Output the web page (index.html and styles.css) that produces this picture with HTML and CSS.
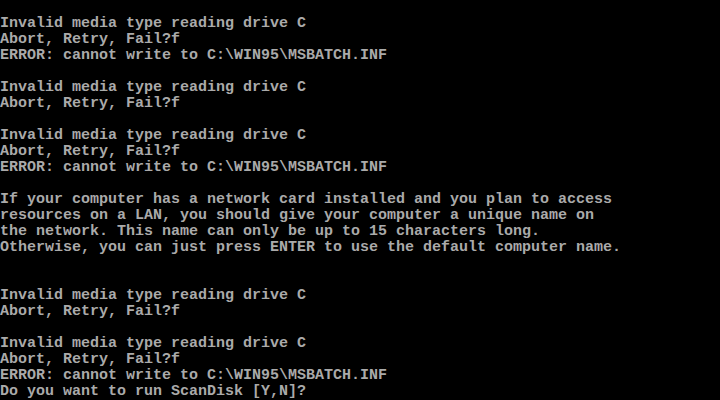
FILE: index.html
```html
<!DOCTYPE html>
<html lang="en">
<head>
    <meta charset="UTF-8">
    <title>Windows 95 Setup</title>
    <link rel="stylesheet" href="styles.css">
</head>
<body>
    <!-- 80x25 text mode console, first row is empty -->
<pre class="console">

Invalid media type reading drive C
Abort, Retry, Fail?f
ERROR: cannot write to C:\WIN95\MSBATCH.INF

Invalid media type reading drive C
Abort, Retry, Fail?f

Invalid media type reading drive C
Abort, Retry, Fail?f
ERROR: cannot write to C:\WIN95\MSBATCH.INF

If your computer has a network card installed and you plan to access
resources on a LAN, you should give your computer a unique name on
the network. This name can only be up to 15 characters long.
Otherwise, you can just press ENTER to use the default computer name.


Invalid media type reading drive C
Abort, Retry, Fail?f

Invalid media type reading drive C
Abort, Retry, Fail?f
ERROR: cannot write to C:\WIN95\MSBATCH.INF
Do you want to run ScanDisk [Y,N]?</pre>
</body>
</html>
```

FILE: styles.css
```css
html, body {
    margin: 0;
    background: #000;
    overflow: hidden;
}
.console {
    margin: 0;
    padding: 0;
    width: 720px;
    height: 400px;
    font-family: "Liberation Mono", "DejaVu Sans Mono", monospace;
    font-size: 15px;
    font-weight: bold;
    line-height: 16px;
    color: #aaaaaa;
    white-space: pre;
}
```
